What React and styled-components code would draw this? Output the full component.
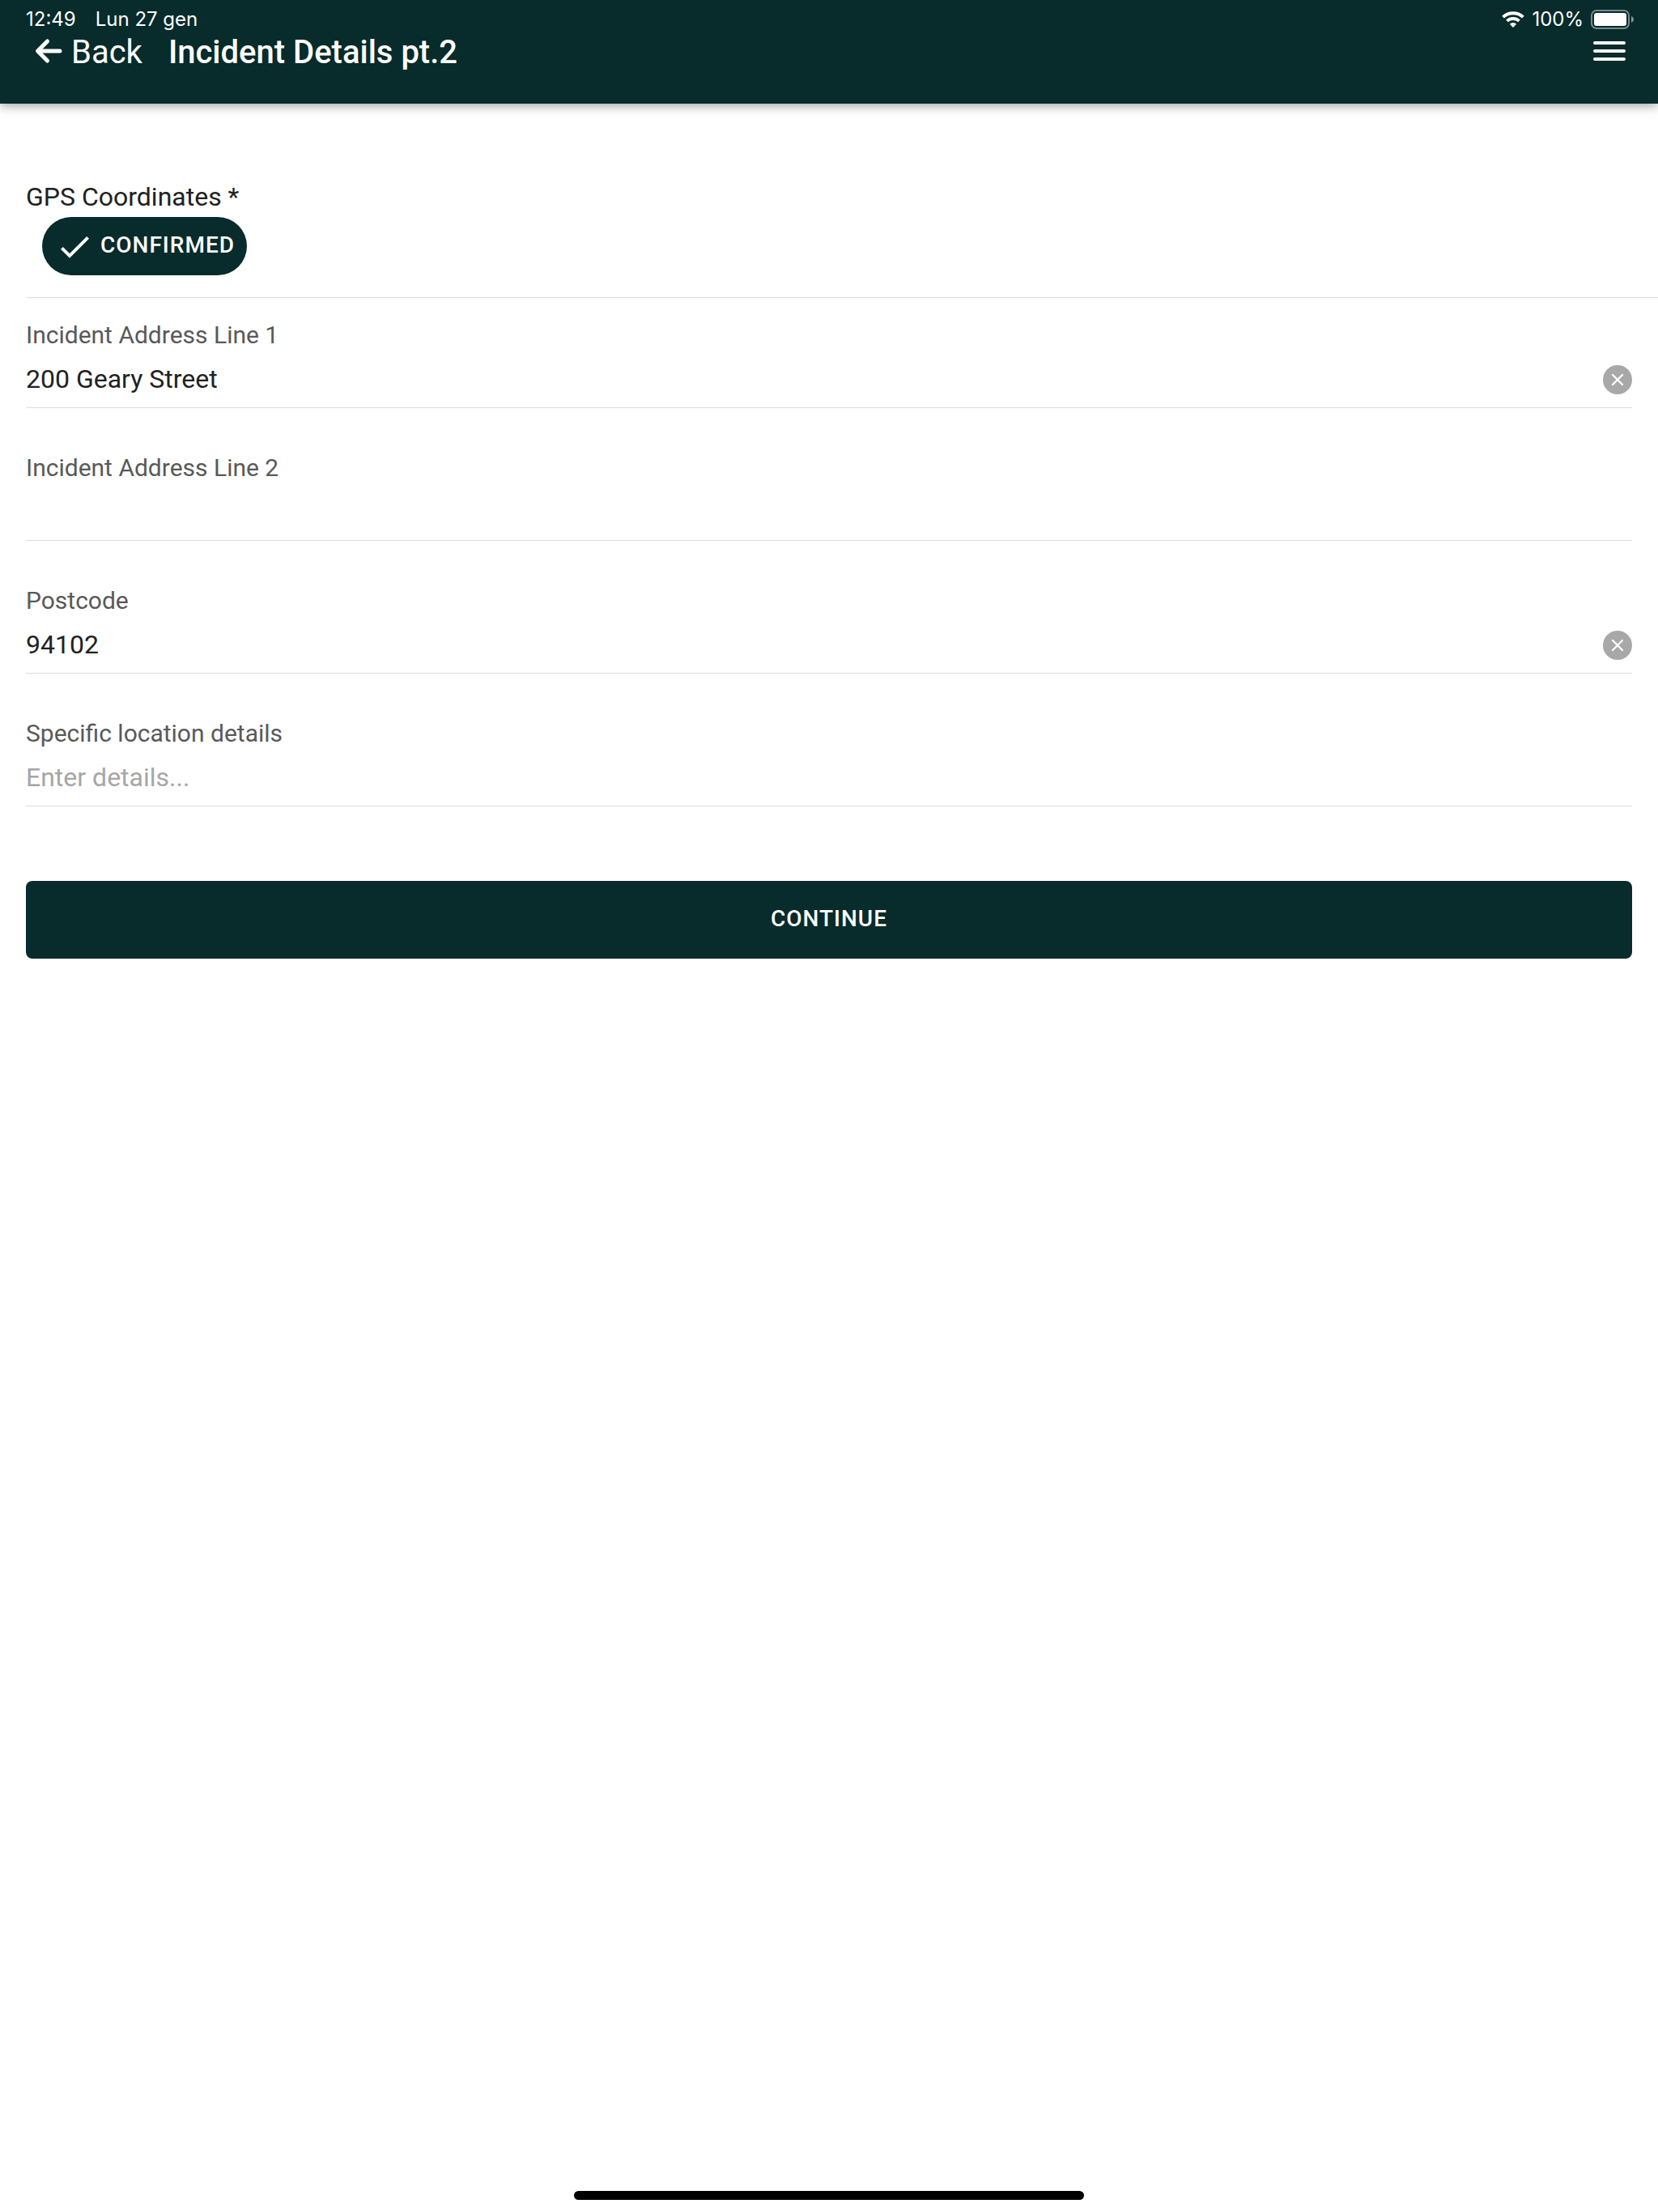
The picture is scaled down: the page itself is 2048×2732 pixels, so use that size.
import { useState } from "react";
import styled, { createGlobalStyle } from "styled-components";

const GlobalStyle = createGlobalStyle`
  *,
  *::before,
  *::after {
    box-sizing: border-box;
  }
  body {
    margin: 0;
    background: #fff;
    color: #212121;
    font-family: Roboto, "Liberation Sans", sans-serif;
  }
  button,
  input {
    font-family: inherit;
    border: none;
    padding: 0;
    margin: 0;
  }
`;

const Page = styled.div`
  display: flex;
  flex-direction: column;
  min-height: 100vh;
`;

const Header = styled.header`
  color: #fff;
  background: #082b2b;
  box-shadow: 0 3px 12px rgba(0, 0, 0, 0.36);
`;

const StatusBar = styled.div`
  display: flex;
  justify-content: space-between;
  height: 40px;
  padding: 8px 29px 0 32px;
  font-family: Inter, "Liberation Sans", sans-serif;
  font-size: 24px;
  line-height: 32px;
`;

const StatusGroup = styled.div`
  display: flex;
  align-items: center;
  gap: ${({ $gap }) => $gap}px;
`;

const Toolbar = styled.div`
  display: flex;
  align-items: center;
  height: 88px;
  padding: 0 40px 40px;
`;

const BackButton = styled.button`
  display: flex;
  align-items: center;
  gap: 8px;
  color: inherit;
  background: none;
  font-size: 40px;
  line-height: 48px;
  cursor: pointer;
`;

const Title = styled.h1`
  flex: 1;
  margin: 0;
  padding: 2px 0 0 32px;
  font-size: 40px;
  font-weight: 500;
  line-height: 48px;
`;

const BackText = styled.span`
  padding-top: 2px;
`;

const MenuButton = styled.button`
  display: flex;
  flex-direction: column;
  gap: 6px;
  width: 40px;
  padding-bottom: 2px;
  background: none;
  cursor: pointer;
`;

const MenuLine = styled.span`
  height: 4px;
  border-radius: 2px;
  background: #fff;
`;

const Content = styled.main`
  flex: 1;
  padding-top: 96px;
`;

const GpsItem = styled.section`
  display: flex;
  flex-direction: column;
  align-items: flex-start;
  gap: 6px;
  margin-left: 32px;
  padding-bottom: 27px;
  border-bottom: 1px solid #dedede;
`;

const GpsLabel = styled.h2`
  margin: 0;
  font-size: 32px;
  font-weight: 400;
  line-height: 38px;
`;

const ActionButton = styled.button`
  color: #fff;
  background: #082b2b;
  padding-bottom: 4px;
  font-size: 28px;
  font-weight: 500;
  letter-spacing: 1px;
  text-transform: uppercase;
  cursor: pointer;
`;

const ConfirmedButton = styled(ActionButton)`
  display: flex;
  align-items: center;
  gap: 11px;
  height: 72px;
  margin-left: 20px;
  padding: 0 15px 4px 20px;
  border-radius: 36px;
`;

const Form = styled.form`
  display: flex;
  flex-direction: column;
  padding: 0 32px;
`;

const Field = styled.div`
  display: grid;
  grid-template-columns: 1fr auto;
  align-items: center;
  margin-top: 28px;
  border-bottom: 1px solid #dedede;

  & + & {
    margin-top: 56px;
  }
`;

const FieldLabel = styled.label`
  grid-column: 1 / -1;
  color: #595959;
  font-size: 30px;
  line-height: 36px;
`;

const FieldInput = styled.input`
  width: 100%;
  height: 71px;
  color: #212121;
  background: none;
  font-size: 32px;
  outline: none;

  &::placeholder {
    color: #a6a6a6;
    opacity: 1;
  }
`;

const ClearButton = styled.button`
  display: flex;
  padding-top: 2px;
  background: none;
  cursor: pointer;
`;

const ContinueButton = styled(ActionButton)`
  height: 96px;
  margin-top: 92px;
  border-radius: 8px;
`;

const HomeIndicator = styled.div`
  align-self: center;
  width: 630px;
  max-width: 60%;
  height: 11px;
  margin-bottom: 15px;
  border-radius: 6px;
  background: #000;
`;

const WifiIcon = () => (
  <svg width="28" height="20" viewBox="0 0 28 20" fill="none" stroke="#fff" strokeWidth="3.9">
    <path d="M1.6 7.2a18 18 0 0 1 24.8 0" />
    <path d="M6.5 11.9a11.3 11.3 0 0 1 15 0" />
    <path d="M14 20l-4.2-4.3a6.3 6.3 0 0 1 8.4 0z" fill="#fff" stroke="none" />
  </svg>
);

const BatteryIcon = () => (
  <svg width="54" height="24" viewBox="0 0 54 24">
    <rect x="1" y="1" width="46" height="22" rx="6" fill="none" stroke="#fff" strokeOpacity="0.45" strokeWidth="2" />
    <rect x="4" y="4" width="40" height="16" rx="3" fill="#fff" />
    <path d="M50 8c4 1.5 4 6.5 0 8z" fill="#fff" fillOpacity="0.5" />
  </svg>
);

const ArrowIcon = () => (
  <svg width="40" height="40" viewBox="0 0 40 40" fill="none" stroke="#fff" strokeWidth="5" strokeLinecap="round" strokeLinejoin="round">
    <path d="M18.5 7L6.5 19l12 12M7 19h27" />
  </svg>
);

const CheckIcon = () => (
  <svg width="41" height="36" viewBox="0 0 41 36" fill="none" stroke="#fff" strokeWidth="4">
    <path d="M4.4 22.4l9.6 9.6 22.6-22.6" />
  </svg>
);

const ClearIcon = () => (
  <svg width="36" height="36" viewBox="0 0 36 36">
    <circle cx="18" cy="18" r="18" fill="#a8a8a8" />
    <path d="M12 12l12 12M24 12l-12 12" stroke="#fff" strokeWidth="2.4" strokeLinecap="round" />
  </svg>
);

const fields = [
  { id: "address1", label: "Incident Address Line 1" },
  { id: "address2", label: "Incident Address Line 2" },
  { id: "postcode", label: "Postcode" },
  { id: "details", label: "Specific location details", placeholder: "Enter details..." },
];

export default function App() {
  const [values, setValues] = useState({
    address1: "200 Geary Street",
    address2: "",
    postcode: "94102",
    details: "",
  });

  const update = (id, value) => setValues((prev) => ({ ...prev, [id]: value }));

  return (
    <Page>
      <GlobalStyle />
      <Header>
        <StatusBar>
          <StatusGroup $gap={24}>
            <span>12:49</span>
            <span>Lun 27 gen</span>
          </StatusGroup>
          <StatusGroup $gap={9}>
            <WifiIcon />
            <span>100%</span>
            <BatteryIcon />
          </StatusGroup>
        </StatusBar>
        <Toolbar>
          <BackButton type="button">
            <ArrowIcon />
            <BackText>Back</BackText>
          </BackButton>
          <Title>Incident Details pt.2</Title>
          <MenuButton type="button" aria-label="Menu">
            <MenuLine />
            <MenuLine />
            <MenuLine />
          </MenuButton>
        </Toolbar>
      </Header>
      <Content>
        <GpsItem>
          <GpsLabel>GPS Coordinates *</GpsLabel>
          <ConfirmedButton type="button">
            <CheckIcon />
            Confirmed
          </ConfirmedButton>
        </GpsItem>
        <Form onSubmit={(e) => e.preventDefault()}>
          {fields.map(({ id, label, placeholder }) => (
            <Field key={id}>
              <FieldLabel htmlFor={id}>{label}</FieldLabel>
              <FieldInput
                id={id}
                value={values[id]}
                placeholder={placeholder}
                onChange={(e) => update(id, e.target.value)}
              />
              {values[id] && (
                <ClearButton type="button" aria-label={`Clear ${label}`} onClick={() => update(id, "")}>
                  <ClearIcon />
                </ClearButton>
              )}
            </Field>
          ))}
          <ContinueButton type="submit">Continue</ContinueButton>
        </Form>
      </Content>
      <HomeIndicator />
    </Page>
  );
}
